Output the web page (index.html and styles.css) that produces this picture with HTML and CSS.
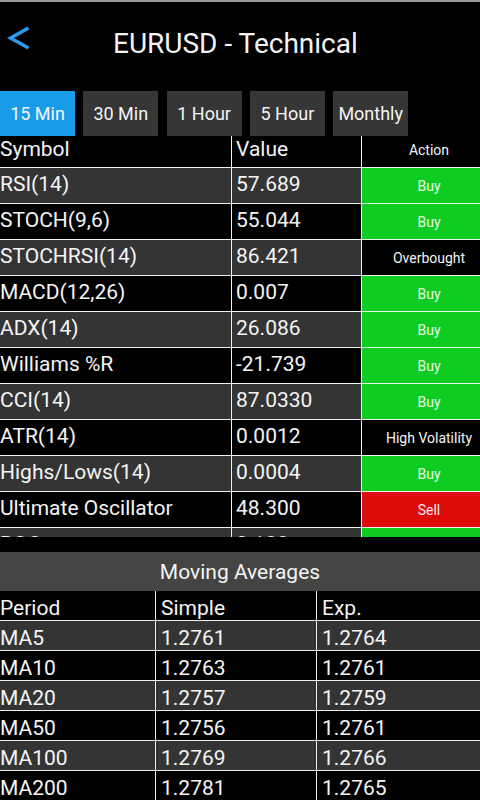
FILE: index.html
```html
<!DOCTYPE html>
<html>
<head>
<meta charset="utf-8">
<link rel="stylesheet" href="styles.css">
</head>
<body>
<div class="header">
  <svg class="back" width="40" height="60" viewBox="0 0 40 60"><polyline points="28.5,28 10.5,38 28.5,48" fill="none" stroke="#2a9df0" stroke-width="3.4"/></svg>
  <div class="title">EURUSD - Technical</div>
</div>
<div class="tabs">
  <div class="tab active">15 Min</div>
  <div class="tab">30 Min</div>
  <div class="tab">1 Hour</div>
  <div class="tab">5 Hour</div>
  <div class="tab">Monthly</div>
</div>
<div class="scroll">
  <div class="grid">
    <div class="c hd sym">Symbol</div><div class="c hd val">Value</div><div class="c hd act">Action</div>
    <div class="c g sym">RSI(14)</div><div class="c g val">57.689</div><div class="c act buy">Buy</div>
    <div class="c sym">STOCH(9,6)</div><div class="c val">55.044</div><div class="c act buy">Buy</div>
    <div class="c g sym">STOCHRSI(14)</div><div class="c g val">86.421</div><div class="c act">Overbought</div>
    <div class="c sym">MACD(12,26)</div><div class="c val">0.007</div><div class="c act buy">Buy</div>
    <div class="c g sym">ADX(14)</div><div class="c g val">26.086</div><div class="c act buy">Buy</div>
    <div class="c sym">Williams %R</div><div class="c val">-21.739</div><div class="c act buy">Buy</div>
    <div class="c g sym">CCI(14)</div><div class="c g val">87.0330</div><div class="c act buy">Buy</div>
    <div class="c sym">ATR(14)</div><div class="c val">0.0012</div><div class="c act">High Volatility</div>
    <div class="c g sym">Highs/Lows(14)</div><div class="c g val">0.0004</div><div class="c act buy">Buy</div>
    <div class="c sym">Ultimate Oscillator</div><div class="c val">48.300</div><div class="c act sell">Sell</div>
    <div class="c g sym">ROC</div><div class="c g val">0.133</div><div class="c act buy">Buy</div>
  </div>
</div>
<div class="ma-title">Moving Averages</div>
<div class="ma">
  <div class="m first">Period</div><div class="m">Simple</div><div class="m">Exp.</div>
  <div class="m g first">MA5</div><div class="m g">1.2761</div><div class="m g">1.2764</div>
  <div class="m first">MA10</div><div class="m">1.2763</div><div class="m">1.2761</div>
  <div class="m g first">MA20</div><div class="m g">1.2757</div><div class="m g">1.2759</div>
  <div class="m first">MA50</div><div class="m">1.2756</div><div class="m">1.2761</div>
  <div class="m g first">MA100</div><div class="m g">1.2769</div><div class="m g">1.2766</div>
  <div class="m first">MA200</div><div class="m">1.2781</div><div class="m">1.2765</div>
</div>
</body>
</html>
```
FILE: styles.css
```css
html, body {
  margin: 0;
  padding: 0;
  background: #000;
}
body {
  width: 480px;
  height: 800px;
  overflow: hidden;
  font-family: Roboto, "Noto Sans", sans-serif;
  color: #f4f4f4;
}
.header {
  height: 88px;
  border-top: 2px solid #9a9a9a;
  display: flex;
  align-items: flex-start;
}
.back {
  display: block;
  margin-top: -2px;
}
.title {
  font-size: 28px;
  margin-left: 73px;
  margin-top: 26px;
  line-height: 32px;
}
.tabs {
  margin-top: 1px;
  display: flex;
  gap: 8.3px;
  height: 45px;
}
.tab {
  width: 75px;
  background: #363636;
  font-size: 18px;
  line-height: 46px;
  text-align: center;
}
.tab.active {
  background: #1a9be8;
}
.scroll {
  height: 401px;
  overflow: hidden;
}
.grid {
  display: grid;
  grid-template-columns: 231px 129px 1fr;
  grid-template-rows: 31px;
  grid-auto-rows: 35px;
  gap: 1px;
  background: #f0f0f0;
}
.c {
  box-sizing: border-box;
  background: #000;
  font-size: 21px;
  display: flex;
  align-items: center;
  white-space: nowrap;
  overflow: hidden;
  padding-bottom: 3px;
}
.c.hd {
  padding-bottom: 6px;
}
.c.g {
  background: #343434;
}
.sym {
  padding-left: 0px;
}
.val {
  padding-left: 4px;
}
.act {
  justify-content: center;
  font-size: 14px;
  padding-bottom: 0;
  padding-left: 16px;
}
.act.hd {
  padding-bottom: 3px;
}
.buy {
  background: #0fcc23 !important;
  color: #eaffea;
}
.sell {
  background: #dd0c0c !important;
  color: #ffeaea;
}
.ma-title {
  margin-top: 15px;
  height: 39px;
  background: #444443;
  font-size: 21px;
  line-height: 40px;
  text-align: center;
}
.ma {
  display: grid;
  grid-template-columns: 155px 160px 1fr;
  grid-template-rows: 29px;
  grid-auto-rows: 29px;
  gap: 1px;
  background: #f0f0f0;
}
.m {
  box-sizing: border-box;
  background: #000;
  font-size: 21px;
  display: flex;
  align-items: center;
  padding-top: 4px;
  padding-left: 5px;
  white-space: nowrap;
}
.m.first {
  padding-left: 0;
}
.m.g {
  background: #343434;
}
```
